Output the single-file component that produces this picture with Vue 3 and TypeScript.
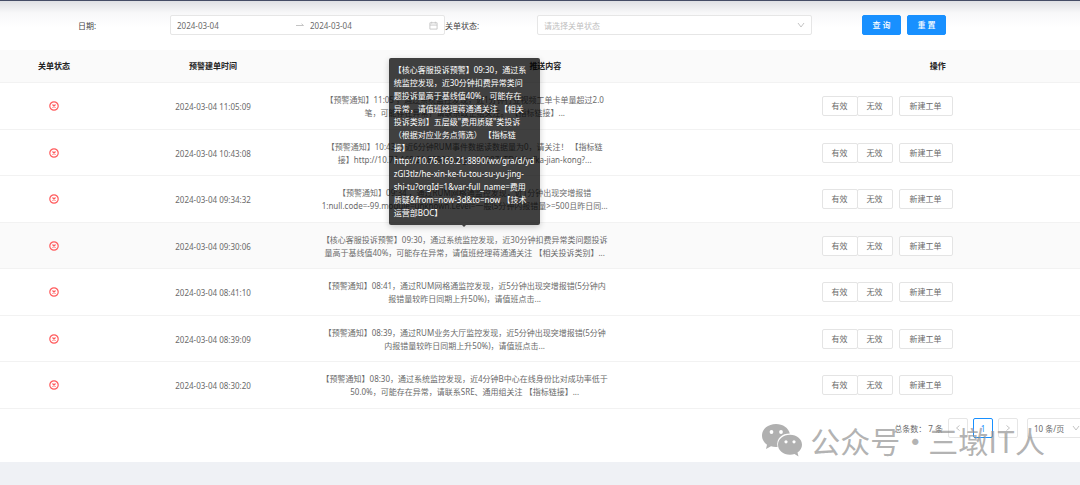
<script setup lang="ts">
import { ref } from 'vue'

interface Alarm {
  time: string
  lines: string[]
  active?: boolean
}

const startDate = ref('2024-03-04')
const endDate = ref('2024-03-04')
const status = ref('')
const pageSize = ref('10')

const alarms: Alarm[] = [
  {
    time: '2024-03-04 11:05:09',
    lines: ['【预警通知】11:05 ，通过系统监控发现，近1分钟行业视频工单卡单量超过2.0', '笔，可能存在异常，请联系政企组关注。 【指标链接】...'],
  },
  {
    time: '2024-03-04 10:43:08',
    lines: ['【预警通知】10:43 ，近6分钟RUM事件数据读数据量为0，请关注！ 【指标链', '接】http://10.76.169.21:8890/wx/gra/d/28ZkTFVz/kafka-jian-kong?...'],
  },
  {
    time: '2024-03-04 09:34:32',
    lines: ['【预警通知】09:34 ，通过RUM网格通监控发现，近1分钟出现突增报错', '1:null.code=-99.module=unknown.Level=一般(5分钟内报错量>=500且昨日同...'],
  },
  {
    time: '2024-03-04 09:30:06',
    lines: ['【核心客服投诉预警】09:30，通过系统监控发现，近30分钟扣费异常类问题投诉', '量高于基线值40%，可能存在异常，请值班经理蒋通通关注 【相关投诉类别】...'],
    active: true,
  },
  {
    time: '2024-03-04 08:41:10',
    lines: ['【预警通知】08:41，通过RUM网格通监控发现，近5分钟出现突增报错(5分钟内', '报错量较昨日同期上升50%)，请值班点击...'],
  },
  {
    time: '2024-03-04 08:39:09',
    lines: ['【预警通知】08:39，通过RUM业务大厅监控发现，近5分钟出现突增报错(5分钟', '内报错量较昨日同期上升50%)，请值班点击...'],
  },
  {
    time: '2024-03-04 08:30:20',
    lines: ['【预警通知】08:30，通过系统监控发现，近4分钟B中心在线身份比对成功率低于', '50.0%，可能存在异常，请联系SRE、通用组关注 【指标链接】...'],
  },
]

const tooltipLines: string[] = [
  '【核心客服投诉预警】09:30，通过系',
  '统监控发现，近30分钟扣费异常类问',
  '题投诉量高于基线值40%，可能存在',
  '异常，请值班经理蒋通通关注 【相关',
  '投诉类别】五层级"费用质疑"类投诉',
  '（根据对应业务点筛选） 【指标链',
  '接】',
  'http://10.76.169.21:8890/wx/gra/d/yd',
  'zGl3tlz/he-xin-ke-fu-tou-su-yu-jing-',
  'shi-tu?orgId=1&var-full_name=费用',
  '质疑&from=now-3d&to=now 【技术',
  '运营部BOC】',
]
</script>

<template>
  <div class="page">
    <main class="panel">
      <form class="filters" @submit.prevent>
        <label class="label first" for="start">日期:</label>
        <div class="range">
          <input id="start" v-model="startDate" type="text" />
          <svg class="arrow" viewBox="0 0 8 8"><path d="M0 4.5h7.5L5.5 2.8" /></svg>
          <input v-model="endDate" type="text" aria-label="结束日期" />
          <svg class="calendar" viewBox="0 0 10 10"><path d="M1 2h8v7H1zM1 4.5h8M3 .8v2M7 .8v2" /></svg>
        </div>
        <label class="label" for="status">关单状态:</label>
        <div class="select">
          <select id="status" v-model="status" class="placeholder">
            <option value="">请选择关单状态</option>
          </select>
          <svg class="chevron" viewBox="0 0 8 8"><path d="M1 2l3 4 3-4" /></svg>
        </div>
        <div class="buttons">
          <button class="primary" type="submit">查 询</button>
          <button class="primary" type="reset">重 置</button>
        </div>
      </form>

      <table>
        <colgroup>
          <col class="c-status" />
          <col class="c-time" />
          <col class="c-content" />
          <col />
        </colgroup>
        <thead>
          <tr>
            <th>关单状态</th>
            <th class="time">预警建单时间</th>
            <th>推送内容</th>
            <th class="op">操作</th>
          </tr>
        </thead>
        <tbody>
          <tr v-for="alarm in alarms" :key="alarm.time" :class="{ active: alarm.active }">
            <td>
              <svg class="closed" viewBox="0 0 10 10" role="img" aria-label="未关单">
                <circle cx="5" cy="5" r="4.2" />
                <path d="M3.5 3.5l3 3M6.5 3.5l-3 3" />
              </svg>
            </td>
            <td class="time">{{ alarm.time }}</td>
            <td>
              <div class="content">
                <div v-for="line in alarm.lines" :key="line">{{ line }}</div>
                <div v-if="alarm.active" class="tooltip" role="tooltip">
                  <div v-for="line in tooltipLines" :key="line">{{ line }}</div>
                </div>
              </div>
            </td>
            <td>
              <div class="actions">
                <div class="group">
                  <button type="button">有效</button>
                  <button type="button">无效</button>
                </div>
                <button type="button">新建工单</button>
              </div>
            </td>
          </tr>
        </tbody>
      </table>

      <nav class="pagination">
        <span class="total">总条数： 7 条</span>
        <button type="button" disabled aria-label="上一页">
          <svg class="chevron" viewBox="0 0 8 8"><path d="M5.5 1.5L2.5 4l3 2.5" /></svg>
        </button>
        <button type="button" class="current">1</button>
        <button type="button" disabled aria-label="下一页">
          <svg class="chevron" viewBox="0 0 8 8"><path d="M2.5 1.5l3 2.5-3 2.5" /></svg>
        </button>
        <div class="select size">
          <select v-model="pageSize" aria-label="每页条数">
            <option value="10">10 条/页</option>
          </select>
          <svg class="chevron" viewBox="0 0 8 8"><path d="M1 2l3 4 3-4" /></svg>
        </div>
      </nav>
    </main>

    <div class="watermark">
      <svg viewBox="0 0 42 34">
        <path d="M15 1C7 1 1 6 1 12.500c0 4 2 7 5 9.200L5 26l5-2.700c2 .7 4 .9 6.500.7C15 15 21 10.500 28.800 10.500 27.500 5 22 1 15 1z" />
        <path d="M29 11.800c-7 0-12 4.500-12 10s5 10 12 10c1.800 0 3.200-.3 4.500-.8l4 2.400-1-3.800c2.800-2 4.500-4.700 4.500-7.800 0-5.500-5-10-12-10z" />
        <g class="eyes">
          <circle cx="10.500" cy="9" r="1.900" />
          <circle cx="20" cy="9" r="1.900" />
          <circle cx="25" cy="18.800" r="1.600" />
          <circle cx="33" cy="18.800" r="1.600" />
        </g>
      </svg>
      <span>公众号</span><span class="dot">·</span><span>三墩IT人</span>
    </div>
  </div>
</template>

<style>
body {
  margin: 0;
  background: #eff1f5;
}
</style>

<style scoped>
* {
  box-sizing: border-box;
}
.page {
  position: relative;
  overflow: hidden;
  font: 8px/13px 'Noto Sans', 'Noto Sans CJK SC', sans-serif;
  color: #6a6a6a;
}
.panel {
  background: linear-gradient(#dfe0e4, #f8f8f9 12px, #fff 26px);
  border-top: 1px solid #454d66;
  padding-bottom: 24px;
}
button,
input,
select {
  font: inherit;
  color: inherit;
  margin: 0;
}
svg {
  fill: none;
  stroke: #c4c4c4;
  stroke-width: 1;
  flex: none;
}
.filters {
  display: grid;
  grid-template-columns:
    minmax(0, 170fr) minmax(0, 275fr) minmax(0, 92fr)
    minmax(0, 275fr) minmax(0, 268fr);
  align-items: center;
  padding: 14px 0 15px;
}
.label {
  color: #444;
}
.first {
  padding-left: 78px;
}
.range,
.select {
  display: flex;
  align-items: center;
  height: 20px;
  background: #fff;
  border: 1px solid #e6e6e6;
  border-radius: 2px;
}
.range {
  padding: 0 6px;
}
.range input {
  flex: 1;
  min-width: 0;
  border: 0;
  padding: 0;
  background: none;
  outline: 0;
}
.arrow {
  width: 8px;
  height: 8px;
  margin-right: 6px;
}
.calendar {
  width: 9px;
  height: 9px;
}
.select {
  position: relative;
}
.select select {
  appearance: none;
  width: 100%;
  height: 18px;
  padding: 0 6px;
  border: 0;
  background: none;
  outline: 0;
}
.select .placeholder {
  color: #bfbfbf;
}
.chevron {
  width: 8px;
  height: 8px;
}
.select .chevron {
  position: absolute;
  right: 6px;
  pointer-events: none;
}
.buttons {
  display: flex;
  gap: 6px;
  padding-left: 50px;
}
.primary {
  width: 39px;
  height: 20px;
  padding: 0 0 2px;
  border: 1px solid #1890ff;
  border-radius: 2px;
  background: #1890ff;
  color: #fff;
  font-weight: 500;
}
table {
  width: 100%;
  table-layout: fixed;
  border-collapse: separate;
  border-spacing: 0;
}
.c-status {
  width: 10%;
}
.c-time {
  width: 19%;
}
.c-content {
  width: 43%;
}
th {
  height: 33px;
  padding: 0 0 1px;
  background: #fafafa;
  border-bottom: 1px solid #f2f2f2;
  color: #222;
  font-weight: 700;
}
td {
  padding: 10px 0;
  border-bottom: 1px solid #f2f2f2;
  text-align: center;
}
tbody tr:nth-child(even) td {
  padding-bottom: 9px;
}
th.time,
td.time {
  padding-left: 5px;
}
th.op {
  padding-left: 18px;
}
.active td {
  background: #fafafa;
}
.closed {
  display: block;
  width: 10px;
  height: 10px;
  margin: 0 auto;
  stroke: #ff5a5c;
  stroke-width: 1.2;
}
.content {
  position: relative;
  width: 303px;
  white-space: nowrap;
}
.tooltip {
  position: absolute;
  z-index: 1;
  left: 50%;
  bottom: 34px;
  width: 151px;
  margin-left: -76px;
  padding: 5px 5px 6px;
  border-radius: 2px;
  background: rgba(0, 0, 0, 0.75);
  box-shadow: 0 2px 6px rgba(0, 0, 0, 0.2);
  color: #fff;
  text-align: left;
}
.tooltip::after {
  content: '';
  position: absolute;
  top: 100%;
  left: 50%;
  margin-left: -2px;
  border: 2px solid transparent;
  border-top-color: #404040;
}
.actions {
  display: flex;
  gap: 6px;
  padding-left: 44px;
}
.group {
  display: flex;
}
.actions button {
  height: 20px;
  padding: 0 9px 2px;
  border: 1px solid #e4e4e4;
  border-radius: 2px;
  background: #fff;
  min-width: 36px;
}
.actions > button {
  min-width: 54px;
}
.group button + button {
  margin-left: -1px;
}
.pagination {
  display: flex;
  justify-content: flex-end;
  align-items: center;
  gap: 5px;
  padding-top: 9px;
}
.pagination button {
  display: flex;
  align-items: center;
  justify-content: center;
  width: 20px;
  height: 20px;
  padding: 0;
  border: 1px solid #e6e6e6;
  border-radius: 2px;
  background: #fff;
}
.pagination .current {
  border-color: #1890ff;
  color: #1890ff;
}
.size {
  width: 60px;
  margin: 0 -7px 0 4px;
}
.watermark {
  position: absolute;
  z-index: 2;
  right: 35px;
  bottom: 0;
  display: flex;
  align-items: center;
  color: rgba(145, 145, 145, 0.7);
  font-size: 30px;
  line-height: 44px;
  font-weight: 400;
  font-family: 'Noto Sans CJK SC', sans-serif;
  pointer-events: none;
}
.watermark svg {
  width: 42px;
  height: 34px;
  margin-right: 7px;
  fill: #b0b0b0;
  stroke: none;
}
.watermark .eyes {
  fill: #fff;
}
.dot {
  width: 28px;
  text-align: center;
}
</style>
